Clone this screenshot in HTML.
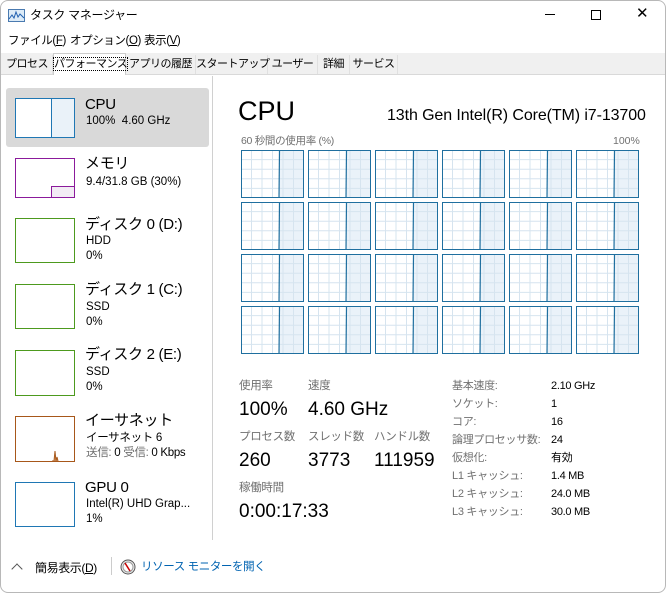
<!DOCTYPE html>
<html><head><meta charset="utf-8"><style>
*{margin:0;padding:0;box-sizing:border-box}
body{width:666px;height:593px;background:#fff;font-family:"Liberation Sans","Noto Sans CJK JP",sans-serif;color:#000;position:relative;overflow:hidden}
.a{position:absolute;white-space:nowrap;line-height:1.2}
.win{position:absolute;left:0;top:0;width:666px;height:593px;border:1px solid #b8b8b8;border-radius:8px}
.tabs{position:absolute;left:1px;top:53px;width:664px;height:22px;background:#f0f0f0;border-bottom:1px solid #d9d9d9}
.tab{position:absolute;top:2px;height:19px;font-size:11px;letter-spacing:-0.5px;line-height:19px;text-align:center;border-right:1px solid #e0e0e0;white-space:nowrap}
.th{position:absolute;left:15px;width:60px;background:#fff}
.t1{font-size:15px;letter-spacing:-0.3px}
.t2{font-size:11.5px}
.g{color:#707070}
.lab{font-size:11.5px;color:#707070;letter-spacing:-0.3px}
.big{font-size:19px}
.sm{font-size:11px;letter-spacing:-0.3px}
.mn{font-size:11.5px;letter-spacing:-0.4px}
</style></head><body>
<div class="win"></div>
<svg class="a" style="left:8px;top:9px" width="17" height="13"><rect x="0.5" y="0.5" width="16" height="12" fill="#dcebf7" stroke="#4a7ab0"/><polyline points="1,10 4,6 6,9 8,3 10,8 12,5 16,9" fill="none" stroke="#2060b0"/></svg>
<div class="a" style="left:30px;top:8px;font-size:12px;letter-spacing:-0.3px">タスク マネージャー</div>
<div class="a" style="left:545px;top:14px;width:10px;height:1px;background:#000"></div>
<div class="a" style="left:591px;top:10px;width:10px;height:10px;border:1px solid #000"></div>
<div class="a" style="left:636px;top:5px;font-size:15px">✕</div>
<div class="a mn" style="left:8px;top:35px">ファイル(<u>F</u>)</div>
<div class="a mn" style="left:70px;top:35px">オプション(<u>O</u>)</div>
<div class="a mn" style="left:144px;top:35px">表示(<u>V</u>)</div>
<div class="tabs">
<div class="tab" style="left:1px;width:51px">プロセス</div>
<div class="tab" style="left:52px;width:73px;top:0;height:22px;background:#fff;border:1px solid #ccc;border-bottom:none;line-height:20px"><span style="outline:1px dotted #000">パフォーマンス</span></div>
<div class="tab" style="left:125px;width:70px">アプリの履歴</div>
<div class="tab" style="left:195px;width:72px">スタートアップ</div>
<div class="tab" style="left:267px;width:50px">ユーザー</div>
<div class="tab" style="left:317px;width:32px">詳細</div>
<div class="tab" style="left:349px;width:48px">サービス</div>
</div>
<div class="a" style="left:212px;top:76px;width:1px;height:464px;background:#d0d0d0"></div>
<div class="a" style="left:6px;top:88px;width:203px;height:59px;background:#d9d9d9;border-radius:3px"></div>
<div class="th" style="top:98px;height:40px;border:1px solid #1f77b4"><div style="position:absolute;left:35px;top:0;right:0;bottom:0;background:#eaf2f9;border-left:1px solid #1f77b4"></div></div>
<div class="a t1" style="left:85px;top:96px">CPU</div><div class="a t2" style="left:86px;top:115px">100%&nbsp; 4.60 GHz</div>
<div class="th" style="top:158px;height:40px;border:1px solid #8b1a9b"><div style="position:absolute;left:35px;top:27px;right:0;bottom:0;background:#f2ecf4;border-left:1px solid #8b1a9b;border-top:1px solid #8b1a9b"></div></div>
<div class="a t1" style="left:85px;top:155px">メモリ</div><div class="a t2" style="left:86px;top:176px">9.4/31.8 GB (30%)</div>
<div class="th" style="top:218px;height:45px;border:1px solid #4d9a1e"></div>
<div class="a t1" style="left:85px;top:216px">ディスク 0 (D:)</div><div class="a t2" style="left:86px;top:235px">HDD</div><div class="a t2" style="left:86px;top:250px">0%</div>
<div class="th" style="top:284px;height:45px;border:1px solid #4d9a1e"></div>
<div class="a t1" style="left:85px;top:281px">ディスク 1 (C:)</div><div class="a t2" style="left:86px;top:301px">SSD</div><div class="a t2" style="left:86px;top:316px">0%</div>
<div class="th" style="top:350px;height:46px;border:1px solid #4d9a1e"></div>
<div class="a t1" style="left:85px;top:346px">ディスク 2 (E:)</div><div class="a t2" style="left:86px;top:366px">SSD</div><div class="a t2" style="left:86px;top:381px">0%</div>
<div class="th" style="top:416px;height:46px;border:1px solid #a7571a"><svg style="position:absolute;left:0;top:0" width="58" height="44"><polyline points="36,44 38,44 39,34 40,44 41,40 42,44" fill="#e4b48a" stroke="#a7571a" stroke-width="1"/></svg></div>
<div class="a t1" style="left:85px;top:412px">イーサネット</div><div class="a t2" style="left:86px;top:432px;letter-spacing:-0.3px">イーサネット 6</div><div class="a t2" style="left:86px;top:447px;letter-spacing:-0.3px"><span class="g">送信:</span> 0 <span class="g">受信:</span> 0 Kbps</div>
<div class="th" style="top:482px;height:45px;border:1px solid #1f77b4"></div>
<div class="a t1" style="left:85px;top:479px">GPU 0</div><div class="a t2" style="left:86px;top:498px">Intel(R) UHD Grap...</div><div class="a t2" style="left:86px;top:513px">1%</div>
<div class="a" style="left:238px;top:95px;font-size:27px">CPU</div>
<div class="a" style="left:387px;top:106px;font-size:16px;letter-spacing:-0.1px">13th Gen Intel(R) Core(TM) i7-13700</div>
<div class="a" style="left:241px;top:135px;font-size:10.5px;color:#707070;letter-spacing:-0.3px">60 秒間の使用率 (%)</div>
<div class="a" style="left:613px;top:135px;font-size:10.5px;color:#707070">100%</div>
<div id="grid"></div>
<div class="a lab" style="left:239px;top:380px">使用率</div>
<div class="a lab" style="left:308px;top:380px">速度</div>
<div class="a big" style="left:239px;top:399px">100%</div>
<div class="a big" style="left:308px;top:399px">4.60 GHz</div>
<div class="a lab" style="left:239px;top:431px">プロセス数</div>
<div class="a lab" style="left:308px;top:431px">スレッド数</div>
<div class="a lab" style="left:374px;top:431px">ハンドル数</div>
<div class="a big" style="left:239px;top:450px">260</div>
<div class="a big" style="left:308px;top:450px">3773</div>
<div class="a big" style="left:374px;top:450px">111959</div>
<div class="a lab" style="left:239px;top:482px">稼働時間</div>
<div class="a big" style="left:239px;top:501px">0:00:17:33</div>
<div id="kv"></div>
<div class="a" style="left:13px;top:565px;width:8px;height:8px;border-left:1px solid #555;border-top:1px solid #555;transform:rotate(45deg)"></div>
<div class="a mn" style="left:35px;top:561px;font-size:12px">簡易表示(<u>D</u>)</div>
<div class="a" style="left:111px;top:557px;width:1px;height:18px;background:#ccc"></div>
<svg class="a" style="left:120px;top:559px" width="16" height="16"><circle cx="8" cy="8" r="7" fill="#eee" stroke="#555"/><circle cx="8" cy="8" r="5" fill="#fff" stroke="#999"/><line x1="5" y1="4" x2="10" y2="12" stroke="#c00" stroke-width="1.5"/></svg>
<div class="a mn" style="left:141px;top:561px;color:#0063b1">リソース モニターを開く</div>
<script>
var s='';
for(var r=0;r<4;r++)for(var c=0;c<6;c++){
var x=241+c*67,y=150+r*52;
var v='<svg class="a" style="left:'+x+'px;top:'+y+'px" width="63" height="48"><rect x="38" y="0" width="25" height="48" fill="#eaf2f9"/>';
for(var i=1;i<6;i++)v+='<line x1="'+(i*10.5)+'" y1="0" x2="'+(i*10.5)+'" y2="48" stroke="#d6e4ef"/>';
for(var j=1;j<5;j++)v+='<line x1="0" y1="'+(j*9.6)+'" x2="63" y2="'+(j*9.6)+'" stroke="#d6e4ef"/>';
v+='<line x1="38.5" y1="0" x2="38" y2="48" stroke="#1f6f9f" stroke-width="1.2"/><rect x="0.5" y="0.5" width="62" height="47" fill="none" stroke="#1f6f9f"/></svg>';
s+=v;}
document.getElementById('grid').innerHTML=s;
var k=[["基本速度:","2.10 GHz"],["ソケット:","1"],["コア:","16"],["論理プロセッサ数:","24"],["仮想化:","有効"],["L1 キャッシュ:","1.4 MB"],["L2 キャッシュ:","24.0 MB"],["L3 キャッシュ:","30.0 MB"]];
var t='';
for(var i=0;i<k.length;i++){var y=380+i*18;t+='<div class="a sm g" style="left:452px;top:'+y+'px">'+k[i][0]+'</div><div class="a sm" style="left:551px;top:'+y+'px">'+k[i][1]+'</div>';}
document.getElementById('kv').innerHTML=t;
</script>
</body></html>
